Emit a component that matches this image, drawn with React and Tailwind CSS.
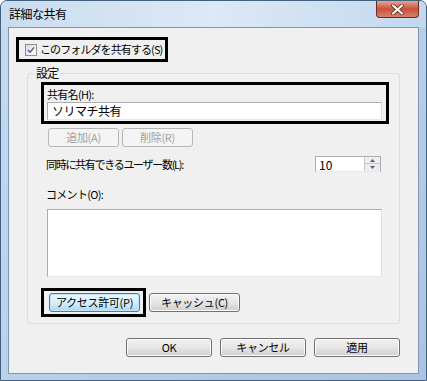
import React from "react";

const font = { fontFamily: '"Noto Sans CJK JP", "Liberation Sans", sans-serif' };

const Button = ({ children, className = "", disabled = false, focused = false }) => (
  <div
    className={`flex h-[19px] items-center justify-center whitespace-nowrap rounded-[3px] border text-[11px] leading-none tracking-[-0.3px] ${
      disabled
        ? "border-[#b5b8bb] bg-[#f4f4f4] text-[#a0a0a0]"
        : focused
        ? "border-[#3c7fb1] bg-gradient-to-b from-[#eaf6fd] via-[#d9f0fc] to-[#a7d9f5] text-black shadow-[inset_0_0_0_1px_#c4e5f6]"
        : "border-[#707070] bg-gradient-to-b from-[#f2f2f2] via-[#e6e6e6] to-[#cfcfcf] text-black shadow-[inset_0_0_0_1px_#fbfbfb]"
    } ${className}`}
  >
    {children}
  </div>
);

export default function App() {
  return (
    <div
      style={font}
      className="flex h-[381px] w-[427px] flex-col overflow-hidden whitespace-nowrap rounded-t-[7px] border border-[#43607e] bg-gradient-to-br from-[#c7dbef] via-[#b9d1ea] to-[#a9c4e2] text-black"
    >
      {/* title bar */}
      <div className="flex h-[26px] shrink-0 items-start bg-gradient-to-r from-[#c9dcef] via-[#dce9f6] to-[#c3d8ee]">
        <span className="ml-[8px] mt-[6px] text-[12px] leading-[14px] tracking-[-0.5px]">詳細な共有</span>
        <div className="ml-auto mr-[7px] flex h-[17px] w-[43px] items-center justify-center rounded-b-[4px] border border-t-0 border-[#6b2a24] bg-gradient-to-b from-[#e4a593] via-[#c9503c] to-[#d9806a]">
          <svg width="13" height="11" viewBox="0 0 13 11">
            <path d="M2 1.5 L11 9.5 M11 1.5 L2 9.5" stroke="#5a1d14" strokeWidth="3.6" strokeLinecap="round" />
            <path d="M2 1.5 L11 9.5 M11 1.5 L2 9.5" stroke="#ffffff" strokeWidth="2.2" strokeLinecap="round" />
          </svg>
        </div>
      </div>

      {/* client area */}
      <div className="ml-[7px] mr-[7px] flex h-[347px] flex-col border border-[#7f97b2] bg-[#f0f0f0] text-[11px] tracking-[-0.7px]">
        {/* share checkbox */}
        <div className="ml-[7px] mt-[9px] flex h-[25px] w-[152px] items-center overflow-hidden border-[3px] border-black">
          <div className="ml-[6px] flex h-[12px] w-[12px] shrink-0 items-center justify-center border border-[#8f8f8f] bg-gradient-to-br from-[#dcdcdc] to-[#fdfdfd]">
            <svg width="8" height="8" viewBox="0 0 9 9">
              <path d="M1 4.5 L3.5 7 L8 1.5" fill="none" stroke="#4a5f97" strokeWidth="1.6" />
            </svg>
          </div>
          <span className="ml-[3px] leading-none tracking-[-0.9px]">このフォルダを共有する(S)</span>
        </div>

        {/* settings group */}
        <div className="relative ml-[18px] mt-[11px] flex h-[251px] w-[373px] flex-col rounded-[3px] border border-[#d5dfe5]">
          <span className="absolute -top-[8px] left-[6px] bg-[#f0f0f0] px-[2px] text-[12px] leading-[14px]">設定</span>

          <div className="ml-[13px] mt-[8px] flex h-[42px] w-[348px] flex-col border-[3px] border-black">
            <span className="ml-[3px] mt-[2px] h-[15px] leading-[14px]">共有名(H):</span>
            <div className="ml-[3px] flex h-[18px] w-[335px] items-center border border-[#abadb3] border-b-[#e3e9ef] border-r-[#dbdfe6] bg-white">
              <span className="ml-[4px] text-[12px] leading-none tracking-[-0.5px]">ソリマチ共有</span>
            </div>
          </div>

          <div className="ml-[20px] mt-[4px] flex gap-[3px]">
            <Button disabled className="w-[71px]">追加(A)</Button>
            <Button disabled className="w-[71px]">削除(R)</Button>
          </div>

          <div className="ml-[18px] mt-[9px] flex h-[16px] w-[335px] items-center justify-between">
            <span className="leading-none tracking-[-1.3px]">同時に共有できるユーザー数(L):</span>
            <div className="flex h-[16px] w-[66px] border border-[#abadb3] border-b-[#e3e9ef] bg-white">
              <span className="ml-[3px] mt-[2px] text-[12px] leading-none tracking-normal">10</span>
              <div className="ml-auto flex w-[16px] flex-col border-l border-[#c9c9c9] bg-[#eeeeee]">
                <div className="flex h-[7px] items-center justify-center border-b border-[#c9c9c9]">
                  <svg width="5" height="3" viewBox="0 0 5 3"><path d="M0 3 L2.5 0 L5 3 Z" fill="#4d6185" /></svg>
                </div>
                <div className="flex h-[7px] items-center justify-center">
                  <svg width="5" height="3" viewBox="0 0 5 3"><path d="M0 0 L2.5 3 L5 0 Z" fill="#4d6185" /></svg>
                </div>
              </div>
            </div>
          </div>

          <span className="ml-[18px] mt-[15px] h-[14px] leading-[14px]">コメント(O):</span>

          <div className="ml-[19px] mt-[8px] h-[68px] w-[335px] border border-[#abadb3] border-b-[#e3e9ef] border-r-[#dbdfe6] bg-white" />

          <div className="ml-[13px] mt-[11px] flex items-center gap-[3px]">
            <div className="flex h-[29px] w-[105px] items-center border-[3px] border-black">
              <Button focused className="ml-[5px] w-[91px]">アクセス許可(P)</Button>
            </div>
            <Button className="w-[91px]">キャッシュ(C)</Button>
          </div>
        </div>

        {/* dialog buttons */}
        <div className="mr-[18px] mt-[14px] flex justify-end gap-[8px]">
          <Button className="w-[86px]">OK</Button>
          <Button className="w-[86px]">キャンセル</Button>
          <Button className="w-[86px]">適用</Button>
        </div>
      </div>
    </div>
  );
}
